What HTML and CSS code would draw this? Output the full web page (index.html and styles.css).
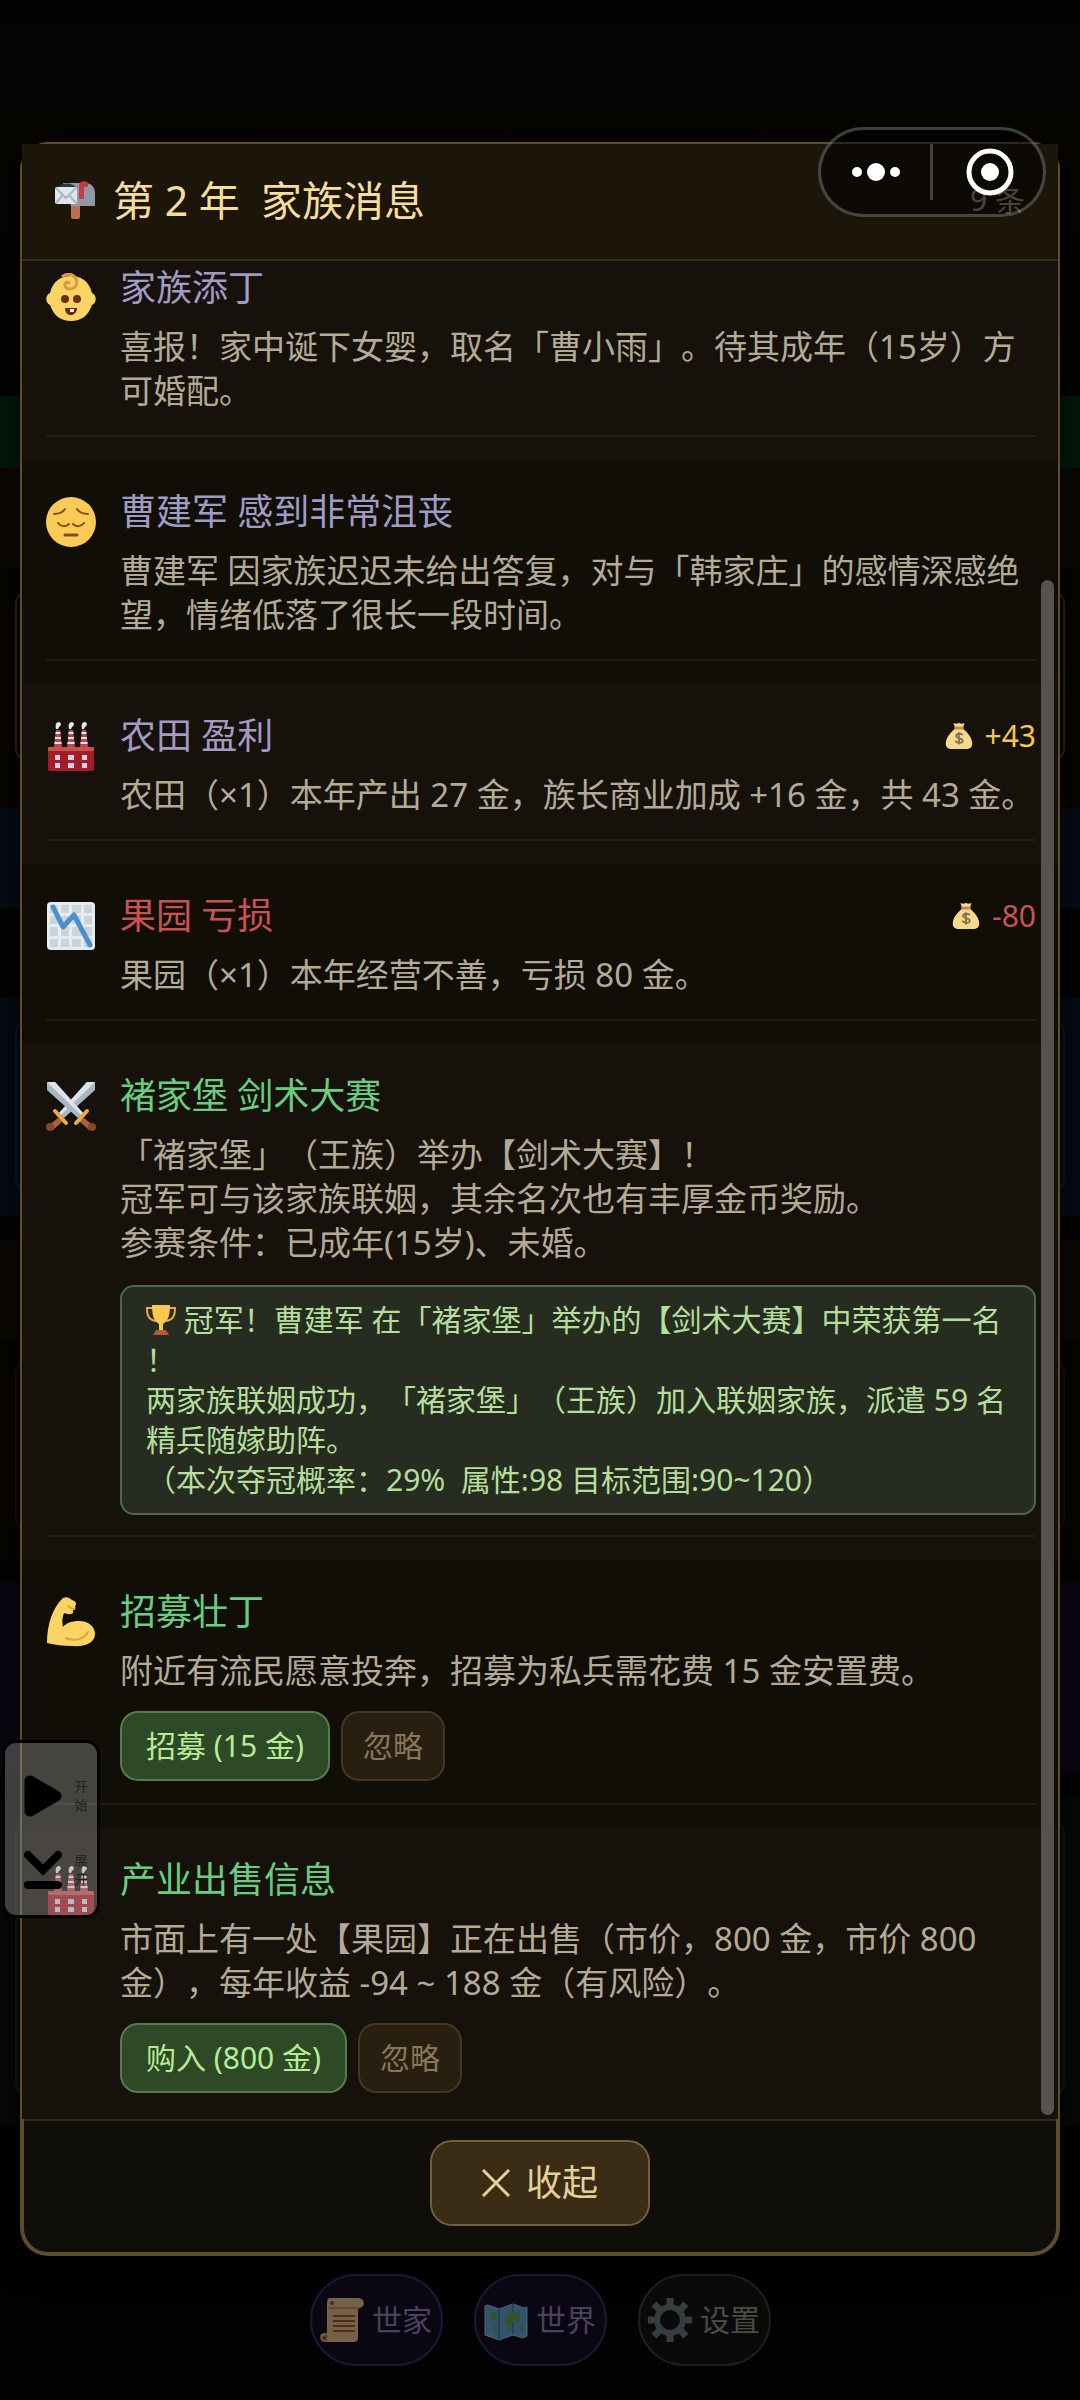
FILE: index.html
```html
<!DOCTYPE html>
<html lang="zh-CN">
<head>
<meta charset="utf-8">
<meta name="viewport" content="width=device-width, initial-scale=1">
<title>家族消息</title>
<link rel="stylesheet" href="styles.css">
</head>
<body>
<svg class="sprite" aria-hidden="true">
  <symbol id="factory" viewBox="0 0 48 50">
    <g fill="#b7485a"><path d="M9 9h4l2 17H7zM22 9h4l2 17h-8zM35 9h4l2 17h-8z"/></g>
    <g stroke="#f3e5e8" stroke-width="2"><path d="M8.500 12h5M8 17h6M7.500 22h7M21.500 12h5M21 17h6M20.500 22h7M34.500 12h5M34 17h6M33.500 22h7"/></g>
    <g fill="#e8e8ea"><path d="M9 8c-1-4 0-7 3-7 3 1 2 4 0 5l-1 2zM22 8c-1-4 0-7 3-7 3 1 2 4 0 5l-1 2zM35 8c-1-4 0-7 3-7 3 1 2 4 0 5l-1 2z"/></g>
    <rect x="1" y="26" width="46" height="24" rx="2" fill="#a31d29"/>
    <rect x="1" y="26" width="46" height="4" rx="1" fill="#c9524c"/>
    <g fill="#cdd3e0"><path d="M8 34h5v5H8zM21 34h6v5h-6zM35 34h5v5h-5zM8 42h5v5H8zM21 42h6v5h-6zM35 42h5v5h-5z"/></g>
  </symbol>
  <symbol id="bag" viewBox="0 0 30 30">
    <path d="M9 1l3 1 3-1 3 1 3-1-2 6c5 4 9 9 10 14 1 6-2 8-6 8H7c-4 0-7-2-6-8C2 16 6 11 11 7z" fill="#f5d98c"/>
    <path d="M10 5h10v3H10z" fill="#c98552"/>
    <path d="M19 14c-1-2-7-2-7 1s7 2 7 5-6 3-8 0M15 11v13" fill="none" stroke="#7d7454" stroke-width="2"/>
  </symbol>
</svg>

<div class="backdrop" aria-hidden="true">
  <div class="band green"></div>
  <div class="band brown"></div>
  <div class="band dark"><div class="card gold"></div></div>
  <div class="band navy"></div>
  <div class="band black"></div>
  <div class="band blue"><div class="card azure"></div></div>
  <div class="band black"></div>
  <div class="band brown"></div>
  <div class="band dark"><div class="card bronze"></div></div>
  <div class="band black"></div>
  <div class="band purple"></div>
  <div class="band black"></div>
  <div class="band forest"><div class="card moss"></div></div>
</div>

<main class="modal" role="dialog" aria-labelledby="modal-title">
  <header class="modal-head">
    <svg class="mail" viewBox="0 0 40 40" aria-hidden="true">
      <rect x="16" y="23" width="9" height="16" rx="2" fill="#b96f50"/>
      <path d="M8 3h22c6 0 10 4 10 10v13H16z" fill="#8f9aa5"/>
      <path d="M3 7c3-4 15-6 19 2v8H3z" fill="#2b3a40"/>
      <rect x="0" y="7" width="22" height="17" rx="2" fill="#dfe7ec"/>
      <path d="M1 8l10 10L21 8M1 23l7-8M21 23l-7-8" fill="none" stroke="#a9b8c2" stroke-width="2"/>
      <path d="M24 19V5c0-4 8-5 9-2 1 3-1 5-4 4v12z" fill="#c33b43"/>
    </svg>
    <h1 class="modal-title" id="modal-title">第 2 年&nbsp; 家族消息</h1>
    <span class="count">9 条</span>
  </header>

  <section class="list">
    <article class="item">
      <div class="row">
        <svg class="icon" viewBox="0 0 50 50" aria-hidden="true">
          <path d="M4 20C7 8 15 3 25 3s18 5 21 17c5 2 5 10 0 12-4 11-11 16-21 16S8 43 4 32c-5-2-5-10 0-12z" fill="#fbd564"/>
          <path d="M17 3c8-5 16 2 13 9-2 5-10 5-11 1-1-3 2-5 4-3" fill="none" stroke="#d99b3d" stroke-width="3" stroke-linecap="round"/>
          <circle cx="19" cy="26" r="4" fill="#6b2f12"/><circle cx="31" cy="26" r="4" fill="#6b2f12"/>
          <path d="M19 35h12c0 9-12 10-12 0z" fill="#6b2512"/><path d="M24 36h4v3h-4z" fill="#fff"/>
        </svg>
        <div class="content">
          <div class="title-row"><h2 class="title calm">家族添丁</h2></div>
          <p class="text">喜报！家中诞下女婴，取名「曹小雨」。待其成年（15岁）方可婚配。</p>
        </div>
      </div>
    </article>

    <article class="item">
      <div class="row">
        <svg class="icon" viewBox="0 0 50 50" aria-hidden="true">
          <circle cx="25" cy="25" r="25" fill="#fbcb55"/>
          <g fill="none" stroke="#7b4f1a" stroke-width="2" stroke-linecap="round"><path d="M8 17c5 0 9-2 11-5M42 17c-5 0-9-2-11-5M12 26c3 4 8 4 11 1M38 26c-3 4-8 4-11 1"/><path d="M19 38h12" stroke-width="3"/></g>
        </svg>
        <div class="content">
          <div class="title-row"><h2 class="title calm">曹建军 感到非常沮丧</h2></div>
          <p class="text">曹建军 因家族迟迟未给出答复，对与「韩家庄」的感情深感绝望，情绪低落了很长一段时间。</p>
        </div>
      </div>
    </article>

    <article class="item">
      <div class="row">
        <svg class="icon" aria-hidden="true"><use href="#factory"/></svg>
        <div class="content">
          <div class="title-row">
            <h2 class="title calm">农田 盈利</h2>
            <span class="gold-change gain"><svg class="bag" aria-hidden="true"><use href="#bag"/></svg>+43</span>
          </div>
          <p class="text">农田（×1）本年产出 27 金，族长商业加成 +16 金，共 43 金。</p>
        </div>
      </div>
    </article>

    <article class="item">
      <div class="row">
        <svg class="icon" viewBox="0 0 50 50" aria-hidden="true">
          <rect x="1" y="1" width="48" height="48" rx="4" fill="#e6edf1"/>
          <path d="M4 4h8v8H4zM15 4h8v8h-8zM26 4h9v8h-9zM38 4h8v8h-8zM4 15h8v8H4zM15 15h8v8h-8zM26 15h9v8h-9zM38 15h8v8h-8zM4 26h8v9H4zM15 26h8v9h-8zM26 26h9v9h-9zM38 26h8v9h-8zM4 38h8v8H4zM15 38h8v8h-8zM26 38h9v8h-9zM38 38h8v8h-8z" fill="#ccd4da"/>
          <path d="M7 6l10 20 11-12 16 30" fill="none" stroke="#4a90d0" stroke-width="5" stroke-linecap="round" stroke-linejoin="round"/>
        </svg>
        <div class="content">
          <div class="title-row">
            <h2 class="title loss">果园 亏损</h2>
            <span class="gold-change loss"><svg class="bag" aria-hidden="true"><use href="#bag"/></svg>-80</span>
          </div>
          <p class="text">果园（×1）本年经营不善，亏损 80 金。</p>
        </div>
      </div>
    </article>

    <article class="item">
      <div class="row">
        <svg class="icon" viewBox="0 0 50 50" aria-hidden="true">
          <path d="M49 1h-8L13 32l5 5L49 9z" fill="#a9b7c1"/><path d="M49 1L15 34l-2-2L41 1z" fill="#dbe4ea"/>
          <path d="M1 1h8l28 31-5 5L1 9z" fill="#a9b7c1"/><path d="M1 1l34 33 2-2L9 1z" fill="#dbe4ea"/>
          <path d="M12 37l5 3-10 9-5-4zM38 37l-5 3 10 9 5-4z" fill="#a7623c"/>
          <path d="M9 30l11 12M41 30L30 42" stroke="#e9ad45" stroke-width="4" stroke-linecap="round"/>
          <circle cx="4" cy="46" r="4" fill="#87452a"/><circle cx="46" cy="46" r="4" fill="#87452a"/>
        </svg>
        <div class="content">
          <div class="title-row"><h2 class="title good">褚家堡 剑术大赛</h2></div>
          <p class="text">「褚家堡」（王族）举办【剑术大赛】！<br>冠军可与该家族联姻，其余名次也有丰厚金币奖励。<br>参赛条件：已成年(15岁)、未婚。</p>
          <p class="result"><svg class="trophy" viewBox="0 0 30 30" aria-hidden="true"><path d="M7 3H1c0 8 2 12 9 13M23 3h6c0 8-2 12-9 13" fill="none" stroke="#eaaa3e" stroke-width="2"/><path d="M6 0h18c0 11-2 16-7 19v6h-4v-6C8 16 6 11 6 0z" fill="#fbc852"/><path d="M10 25h10l3 5H7z" fill="#b5563f"/></svg> 冠军！曹建军 在「褚家堡」举办的【剑术大赛】中荣获第一名<br>！<br>两家族联姻成功，「褚家堡」（王族）加入联姻家族，派遣 59 名精兵随嫁助阵。<br>（本次夺冠概率：29%&nbsp; 属性:98 目标范围:90~120）</p>
        </div>
      </div>
    </article>

    <article class="item">
      <div class="row">
        <svg class="icon" viewBox="0 0 50 50" aria-hidden="true">
          <path d="M1 46C1 27 7 10 17 1c4-2 7 0 9 2 4 1 5 4 3 6 1 3 0 4-2 4v3c-3 2-6 1-9 0-2 5-2 10-1 14 3-4 9-6 16-6 10 0 16 6 16 13 0 8-8 13-23 12-9 0-17-1-25-3z" fill="#fbd564"/>
          <path d="M20 41c9 4 18 1 22-6M22 9c2 2 4 3 6 3" fill="none" stroke="#dfa23d" stroke-width="2" stroke-linecap="round"/>
        </svg>
        <div class="content">
          <div class="title-row"><h2 class="title good">招募壮丁</h2></div>
          <p class="text">附近有流民愿意投奔，招募为私兵需花费 15 金安置费。</p>
          <div class="actions">
            <button class="btn accept" type="button">招募 (15 金)</button>
            <button class="btn ignore" type="button">忽略</button>
          </div>
        </div>
      </div>
    </article>

    <article class="item">
      <div class="row">
        <svg class="icon" aria-hidden="true"><use href="#factory"/></svg>
        <div class="content">
          <div class="title-row"><h2 class="title good">产业出售信息</h2></div>
          <p class="text">市面上有一处【果园】正在出售（市价，800 金，市价 800 金），每年收益 -94 ~ 188 金（有风险）。</p>
          <div class="actions">
            <button class="btn accept" type="button">购入 (800 金)</button>
            <button class="btn ignore" type="button">忽略</button>
          </div>
        </div>
      </div>
    </article>
    <div class="thumb" aria-hidden="true"></div>
  </section>

  <footer class="modal-foot">
    <button class="collapse" type="button">
      <svg class="cross" viewBox="0 0 28 28" aria-hidden="true"><path d="M1 1l26 26M27 1L1 27" stroke="#e3d09b" stroke-width="3"/></svg>收起
    </button>
  </footer>
</main>

<nav class="dock">
  <button class="pill violet" type="button">
    <svg class="pill-icon" viewBox="0 0 44 44" aria-hidden="true">
      <path d="M10 0h29c7 1 6 10 0 10h-1v30c0 3-2 4-4 4H4c-5-1-5-9 0-9h3V5c0-3 1-5 3-5z" fill="#dfbb78"/>
      <path d="M9 10h30M4 36c4 1 3 7 0 8" fill="none" stroke="#b88f50" stroke-width="2"/><circle cx="12" cy="5" r="2" fill="#7d5235"/><circle cx="4" cy="40" r="2" fill="#7d5235"/>
      <path d="M13 18h22M13 23h22M13 28h22M13 33h22" stroke="#96542f" stroke-width="2"/>
    </svg>世家
  </button>
  <button class="pill violet" type="button">
    <svg class="pill-icon" viewBox="0 0 44 44" aria-hidden="true">
      <path d="M1 8l3-1 11 4 14-5 11 4 3-1v29l-4 2-10-3-14 5-11-4-3-1z" fill="#5a9fc5" stroke="#a6bbc5"/>
      <path d="M15 11v30M29 6v30" stroke="#3f7d9e" stroke-width="2"/>
      <path d="M5 15l9-1-1 6-4 4zM9 26l5 2-3 8zM22 18l6-5 9 3-3 9-5-2-4 10-5-9zM36 28l3 1-1 5-4-2z" fill="#5e9c48"/>
    </svg>世界
  </button>
  <button class="pill grey" type="button">
    <svg class="pill-icon" viewBox="0 0 44 44" aria-hidden="true">
      <circle cx="22" cy="22" r="13" fill="none" stroke="#5d7077" stroke-width="6"/>
      <path d="M22 0v8M22 36v8M0 22h8M36 22h8M6 6l6 6M32 32l6 6M38 6l-6 6M12 32l-6 6" stroke="#5d7077" stroke-width="7"/>
    </svg>设置
  </button>
</nav>

<div class="capsule">
  <button class="capsule-btn more" type="button" aria-label="更多"><svg class="dots" viewBox="0 0 48 18" aria-hidden="true"><g fill="#fff"><circle cx="5" cy="9" r="5"/><circle cx="24" cy="9" r="9"/><circle cx="43" cy="9" r="5"/></g></svg></button>
  <button class="capsule-btn close" type="button" aria-label="关闭"><svg class="target" viewBox="0 0 48 48" aria-hidden="true"><circle cx="24" cy="24" r="21" fill="none" stroke="#fff" stroke-width="5"/><circle cx="24" cy="24" r="9" fill="#fff"/></svg></button>
</div>

<aside class="floater">
  <button class="float-btn" type="button"><svg class="float-icon" viewBox="0 0 38 42" aria-hidden="true"><path d="M6 6l26 15L6 36z" stroke="#000" stroke-width="11" stroke-linejoin="round"/></svg><span class="float-label">开始</span></button>
  <button class="float-btn" type="button"><svg class="float-icon" viewBox="0 0 38 42" aria-hidden="true"><path d="M4 6l15 15L34 6M4 36h30" fill="none" stroke="#000" stroke-width="8" stroke-linecap="round"/></svg><span class="float-label">展开</span></button>
</aside>
</body>
</html>
```
FILE: styles.css
```css
* { box-sizing: border-box; }
body {
  position: relative;
  margin: 0;
  min-height: 100vh;
  padding-bottom: 32px;
  background: #030302;
  color: #b3ab96;
  font-family: "Noto Sans", "Noto Sans CJK SC", sans-serif;
  font-size: 33px;
  line-height: 44px;
  text-spacing-trim: space-all;
}
h1, h2, p { margin: 0; font-weight: 400; }
button { margin: 0; font: inherit; cursor: pointer; }
.sprite { position: absolute; width: 0; height: 0; }

/* Dimmed home screen behind the dialog */
.backdrop {
  position: absolute;
  inset: 0;
  display: grid;
  grid-template-rows: 72px 100px 240px 100px 90px 218px 24px 98px 220px 24px 192px 24px 328px;
  padding-top: 396px;
  background: linear-gradient(#030302, #060502 142px, #030302 396px, #020202);
}
.band { padding: 20px 15px; }
.green { background: #04180b; }
.brown { background: #0c0804; }
.dark { background: #060502; }
.navy { background: #060c17; }
.black { background: #030303; }
.blue { background: #050b15; }
.purple { background: #0a0612; }
.forest { background: #050906; }
.card { height: 176px; border: 2px solid; border-radius: 16px; }
.gold { border-color: #33280f; }
.azure { border-color: #0b192c; }
.bronze { border-color: #1b1306; }
.moss { height: 280px; border-color: #0b1f11; }

.modal {
  position: relative;
  margin: 142px 20px 0;
  border: 4px solid #5e4d2a;
  border-top-width: 2px;
  border-radius: 28px;
  background: #100e08;
  box-shadow: 0 0 40px rgba(0, 0, 0, 0.7);
}
.modal-head {
  display: flex;
  align-items: center;
  gap: 18px;
  height: 117px;
  margin: 0 -2px;
  padding: 0 33px 3px;
  border-bottom: 2px solid #342b1f;
  background: #1b150a;
}
.mail { width: 40px; height: 40px; }
.modal-title { flex: 1; font-size: 41px; line-height: 60px; color: #f5dd9b; white-space: nowrap; }
.count { font-size: 30px; color: #958666; }

.list { position: relative; margin: 0 -2px; overflow: hidden; }
.item { padding: 26px 22px 24px 24px; background: #110e08; }
.item:nth-child(odd) { background: #17110b; }
.item:first-child { margin-top: -24px; }
.row {
  display: flex;
  gap: 24px;
  padding-bottom: 22px;
  border-bottom: 2px solid #231d16;
}
.item:nth-child(7) .row { padding-bottom: 2px; border-bottom: 0; }
.icon { flex: none; width: 50px; height: 50px; margin-top: 10px; }
.content { flex: 1; min-width: 0; }
.title-row { display: flex; align-items: center; justify-content: space-between; height: 50px; margin-bottom: 12px; }
.title { font-size: 36px; line-height: 50px; }
.calm { color: #a09bc5; }
.good { color: #69cd80; }
.loss { color: #c95353; }
.gain { color: #f2c84f; }
.gold-change { display: flex; align-items: center; gap: 12px; font-size: 30px; }
.bag { width: 28px; height: 30px; }

.result {
  margin: 20px 0 -2px;
  padding: 13px 24px;
  border: 2px solid #4d6840;
  border-radius: 14px;
  background: #262c1f;
  color: #b5de9d;
  font-size: 30px;
  line-height: 40px;
}
.trophy { width: 30px; height: 30px; vertical-align: -4px; }

.actions { display: flex; gap: 11px; margin-top: 18px; }
.btn { height: 70px; border: 2px solid; border-radius: 18px; font-size: 30px; line-height: 40px; white-space: nowrap; }
.accept { padding: 0 24px; border-color: #567c4b; background: #2d4926; color: #b7eb96; }
.ignore { padding: 0 20px; border-color: #443620; background: #291f11; color: #877658; }
.thumb {
  position: absolute;
  top: 319px;
  right: 4px;
  bottom: 4px;
  width: 13px;
  border-radius: 7px;
  background: #555250;
}

.modal-foot {
  display: flex;
  justify-content: center;
  padding: 19px 0 26px;
  border-top: 2px solid #342a1c;
}
.collapse {
  display: flex;
  align-items: center;
  gap: 16px;
  height: 86px;
  padding: 0 50px;
  border: 2px solid #71603a;
  border-radius: 22px;
  background: #3a2c15;
  color: #e3d09b;
  font-size: 36px;
}
.cross { width: 28px; height: 28px; }

.dock { position: relative; display: flex; justify-content: center; gap: 31px; margin-top: 18px; }
.pill {
  display: flex;
  align-items: center;
  justify-content: center;
  gap: 8px;
  width: 133px;
  height: 92px;
  padding: 0;
  border: 2px solid;
  border-radius: 46px;
  font-size: 30px;
  white-space: nowrap;
}
.violet { border-color: #1d1730; background: #0a0713; color: #49435c; }
.grey { border-color: #201e1a; background: #0b0a09; color: #4c4a45; }
.pill-icon { flex: none; width: 44px; height: 44px; opacity: 0.5; }

/* Host app controls floating above everything */
.capsule {
  position: absolute;
  top: 127px;
  right: 34px;
  display: flex;
  width: 228px;
  height: 90px;
  border: 3px solid rgba(255, 255, 255, 0.24);
  border-radius: 45px;
  background: rgba(0, 0, 0, 0.5);
}
.capsule-btn { display: flex; align-items: center; justify-content: center; padding: 0; border: 0; background: none; }
.more { width: 109px; }
.close { flex: 1; padding-right: 29px; }
.close::before { content: ""; width: 3px; height: 56px; margin-right: auto; background: rgba(255, 255, 255, 0.24); }
.dots { width: 48px; height: 18px; }
.target { width: 48px; height: 48px; }

.floater {
  position: absolute;
  top: 1740px;
  left: 2px;
  display: flex;
  flex-direction: column;
  gap: 20px;
  width: 98px;
  padding: 26px 0;
  height: 178px;
  border: 3px solid #000;
  border-radius: 14px;
  background: rgba(150, 150, 148, 0.4);
}
.float-btn { display: flex; flex: none; align-items: center; gap: 12px; height: 54px; padding: 0 8px 0 19px; border: 0; background: none; }
.float-icon { flex: none; width: 38px; height: 42px; }
.float-label { width: 14px; font-size: 13px; line-height: 19px; color: #22211f; }
```
